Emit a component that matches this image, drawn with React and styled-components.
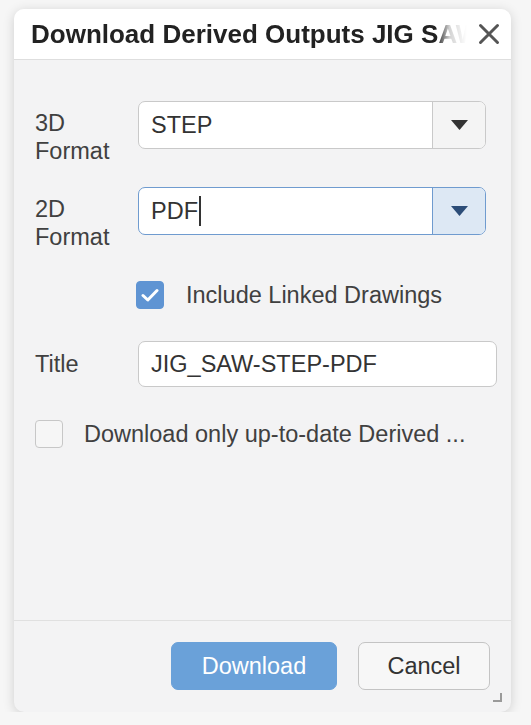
import React from 'react'
import styled, { createGlobalStyle } from 'styled-components'

const Global = createGlobalStyle`
  html, body {
    margin: 0;
    padding: 0;
    background: #f6f6f6;
    font-family: "Liberation Sans", Arial, sans-serif;
  }
`

const Dialog = styled.div`
  margin: 9px 0 0 14px;
  width: 497px;
  height: 703px;
  background: #f3f3f4;
  border-radius: 10px;
  box-shadow: 0 2px 12px rgba(0, 0, 0, 0.16);
  display: flex;
  flex-direction: column;
  overflow: hidden;
  position: relative;
`

const Header = styled.div`
  height: 50px;
  flex: none;
  background: #fff;
  border-bottom: 1px solid #dedede;
  display: flex;
  align-items: center;
  padding: 0 7px 0 17px;
  gap: 7px;
`

const Heading = styled.div`
  flex: 1;
  font-size: 26px;
  font-weight: bold;
  color: #222;
  white-space: nowrap;
  overflow: hidden;
  -webkit-mask-image: linear-gradient(to right, #000 93%, rgba(0, 0, 0, 0.2) 96%, transparent 100%);
`

const Close = styled.button`
  border: none;
  background: none;
  padding: 0;
  width: 30px;
  height: 30px;
  display: flex;
  align-items: center;
  justify-content: center;
  cursor: pointer;
`

const Body = styled.div`
  flex: 1;
  padding: 41px 14px 0 21px;
  display: flex;
  flex-direction: column;
`

const Row = styled.div`
  display: flex;
  align-items: ${p => (p.top ? 'flex-start' : 'center')};
  margin-bottom: ${p => p.mb || 0}px;
  margin-left: ${p => p.indent || 0}px;
`

const Label = styled.div`
  width: 103px;
  flex: none;
  font-size: 23.5px;
  line-height: 28px;
  color: #404040;
  padding-top: ${p => p.pt || 0}px;
`

const Select = styled.div`
  width: 348px;
  height: 48px;
  box-sizing: border-box;
  display: flex;
  border: 1.5px solid ${p => (p.focus ? '#6f9bcf' : '#c9c9c9')};
  border-radius: 7px;
  background: #fff;
  overflow: hidden;
`

const Value = styled.div`
  flex: 1;
  display: flex;
  align-items: center;
  padding-left: 12px;
  font-size: 23.5px;
  color: #333;
`

const Caret = styled.span`
  display: inline-block;
  width: 1.5px;
  height: 30px;
  background: #333;
  margin-left: 1px;
`

const Arrow = styled.div`
  width: 52px;
  flex: none;
  border-left: 1.5px solid ${p => (p.focus ? '#6f9bcf' : '#c9c9c9')};
  background: ${p => (p.focus ? '#dde8f4' : '#f4f4f4')};
  display: flex;
  align-items: center;
  justify-content: center;
`

const Box = styled.div`
  width: 28px;
  height: 28px;
  box-sizing: border-box;
  border-radius: 4px;
  flex: none;
  background: ${p => (p.checked ? '#5f94d3' : '#f6f6f6')};
  border: 1.5px solid ${p => (p.checked ? '#5f94d3' : '#c7c7c7')};
  display: flex;
  align-items: center;
  justify-content: center;
`

const CheckText = styled.span`
  font-size: 23.5px;
  color: #404040;
  margin-left: ${p => p.gap}px;
  white-space: nowrap;
`

const TextInput = styled.div`
  flex: 1;
  height: 46px;
  box-sizing: border-box;
  border: 1.5px solid #c9c9c9;
  border-radius: 7px;
  background: #fff;
  display: flex;
  align-items: center;
  padding-left: 12px;
  font-size: 23.5px;
  color: #333;
`

const Footer = styled.div`
  height: 92px;
  flex: none;
  border-top: 1px solid #e0e0e0;
  box-sizing: border-box;
  display: flex;
  justify-content: flex-end;
  align-items: flex-start;
  padding: 21px 21px 0 0;
  gap: 21px;
`

const Button = styled.button`
  height: 48px;
  width: ${p => p.w}px;
  border-radius: 7px;
  font-family: inherit;
  font-size: 23.5px;
  cursor: pointer;
  background: ${p => (p.primary ? '#6aa1d9' : '#f7f7f7')};
  color: ${p => (p.primary ? '#fff' : '#333')};
  border: 1.5px solid ${p => (p.primary ? '#6aa1d9' : '#c4c4c4')};
`

const Grip = styled.div`
  position: absolute;
  right: 9px;
  bottom: 10px;
  width: 9px;
  height: 9px;
  border-right: 2px solid #9a9a9a;
  border-bottom: 2px solid #9a9a9a;
  box-sizing: border-box;
`

const Triangle = ({ color }) => (
  <svg width="17" height="10" viewBox="0 0 17 10">
    <path d="M0 0 H17 L8.5 10 Z" fill={color} />
  </svg>
)

export default function App() {
  return (
    <>
      <Global />
      <Dialog>
        <Header>
          <Heading>Download Derived Outputs JIG SAW</Heading>
          <Close>
            <svg width="24" height="24" viewBox="0 0 24 24">
              <path d="M3.5 3.5 L20.5 20.5 M20.5 3.5 L3.5 20.5" stroke="#555" strokeWidth="3" strokeLinecap="round" />
            </svg>
          </Close>
        </Header>
        <Body>
          <Row top mb={22}>
            <Label pt={8}>3D<br />Format</Label>
            <Select>
              <Value>STEP</Value>
              <Arrow><Triangle color="#333" /></Arrow>
            </Select>
          </Row>
          <Row top mb={30}>
            <Label pt={8}>2D<br />Format</Label>
            <Select focus>
              <Value>PDF<Caret /></Value>
              <Arrow focus><Triangle color="#2c4d78" /></Arrow>
            </Select>
          </Row>
          <Row mb={32} indent={101}>
            <Box checked>
              <svg width="18" height="14" viewBox="0 0 18 14">
                <path d="M2 7.5 L6.8 12 L16 2.5" stroke="#fff" strokeWidth="3" fill="none" strokeLinecap="round" strokeLinejoin="round" />
              </svg>
            </Box>
            <CheckText gap={22}>Include Linked Drawings</CheckText>
          </Row>
          <Row mb={33}>
            <Label>Title</Label>
            <TextInput>JIG_SAW-STEP-PDF</TextInput>
          </Row>
          <Row>
            <Box />
            <CheckText gap={21}>Download only up-to-date Derived ...</CheckText>
          </Row>
        </Body>
        <Footer>
          <Button primary w={166}>Download</Button>
          <Button w={132}>Cancel</Button>
        </Footer>
        <Grip />
      </Dialog>
    </>
  )
}
